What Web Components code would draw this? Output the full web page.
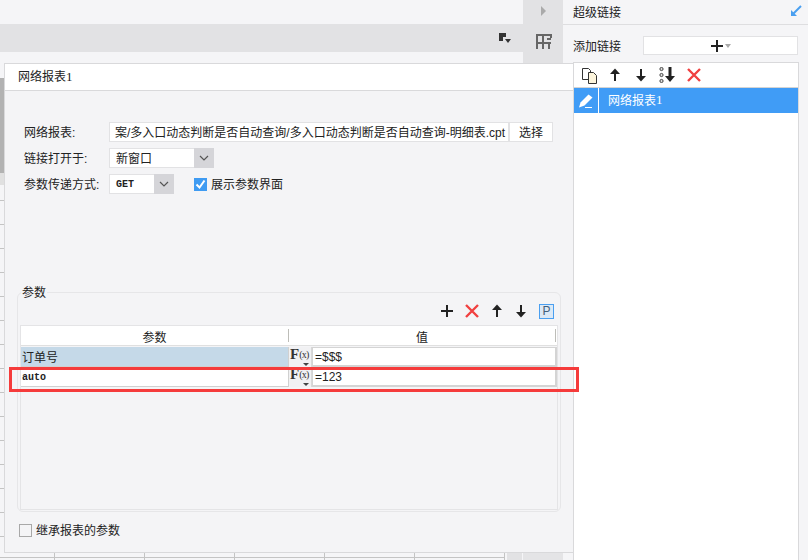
<!DOCTYPE html>
<html>
<head>
<meta charset="utf-8">
<style>
  html, body { margin: 0; padding: 0; background: #fff; }
  body { width: 808px; height: 560px; overflow: hidden; font: 12px "Liberation Sans", "Noto Sans CJK SC", sans-serif; color: #222; }
  .digit { font-family: "Liberation Serif", serif; font-size: 13px; }
</style>
</head>
<body>

<template id="icons">
  <svg data-name="plus" width="14" height="14" viewBox="0 0 14 14"><path d="M7 1v12M1 7h12" stroke="#222" stroke-width="2" fill="none"/></svg>
  <svg data-name="close" width="16" height="16" viewBox="0 0 16 16"><path d="M2 2l12 12M14 2L2 14" stroke="#f04040" stroke-width="2.4" fill="none"/></svg>
  <svg data-name="up" width="12" height="14" viewBox="0 0 12 14"><path d="M6 13V4" stroke="#222" stroke-width="2" fill="none"/><path d="M1 6l5-5.500L11 6z" fill="#222"/></svg>
  <svg data-name="down" width="12" height="14" viewBox="0 0 12 14"><path d="M6 1v9" stroke="#222" stroke-width="2" fill="none"/><path d="M1 8l5 5.500L11 8z" fill="#222"/></svg>
</template>

<script>
// Kleine Helfer für die Icons, damit nicht jedes Element sie neu schreiben muss
function icon(name) {
  const tpl = document.getElementById('icons');
  return tpl.content.querySelector(`[data-name="${name}"]`).outerHTML;
}

class XIcon extends HTMLElement {
  connectedCallback() {
    const shadow = this.attachShadow({ mode: 'open' });
    shadow.innerHTML = `
      <style>
        :host { display: inline-flex; align-items: center; justify-content: center; }
        svg { display: block; }
      </style>
      ${icon(this.getAttribute('name'))}`;
  }
}

// ---------- Hintergrund: Werkzeugleiste und Tabellenraster ----------
class XWorkspace extends HTMLElement {
  connectedCallback() {
    this.attachShadow({ mode: 'open' }).innerHTML = `
      <style>
        :host { display: flex; flex-direction: column; width: 574px; height: 560px; background: #f5f5f7; }
        .top { display: flex; height: 63px; flex: none; }
        .bands { flex: 1; display: flex; flex-direction: column; padding-top: 24px; }
        .band { height: 28px; background: #e2e2e4; display: flex; justify-content: flex-end; align-items: center; padding-right: 11px; }
        .side { width: 40px; background: #e2e2e4; margin-right: 11px; display: flex; flex-direction: column; align-items: center; }
        .arrow { width: 0; height: 0; margin-top: 6px; margin-left: 1px; border-left: 5px solid #aaa; border-top: 5px solid transparent; border-bottom: 5px solid transparent; }
        .side svg { margin-top: 17px; margin-left: 1px; }
        .sheet { flex: 1; display: flex; flex-direction: column; background:
          linear-gradient(#e2e2e4, #e2e2e4) 507px 489px / 15px 8px no-repeat,
          linear-gradient(#e4e4e6, #e4e4e6) 523px 489px / 40px 8px no-repeat,
          linear-gradient(#c4c4c4, #c4c4c4) 0 494px / 505px 1px no-repeat,
          repeating-linear-gradient(90deg, transparent 0 54px, #c4c4c4 54px 55px, transparent 55px 90px) 0 0 / 505px 100% no-repeat,
          repeating-linear-gradient(180deg, transparent 0 17px, #c4c4c4 17px 18px, transparent 18px 24px);
        }
        .strip { width: 4px; height: 95px; margin-top: 15px; background: #b2b2b2; flex: none; }
        .strip2 { width: 4px; height: 12px; background: #e0e0e0; flex: none; }
      </style>
      <div class="top">
        <div class="bands">
          <div class="band">
            <svg width="14" height="12" viewBox="0 0 14 12"><path d="M1 1h7v4H5v4H1z" fill="#333"/><path d="M7 7h6l-3 4z" fill="#333"/></svg>
          </div>
        </div>
        <div class="side">
          <div class="arrow"></div>
          <svg width="17" height="17" viewBox="0 0 17 17" fill="none" stroke="#666" stroke-width="2"><path d="M2 16V2h14v3M2 10h14v0M8 2v14M14 10v6M12 6h4"/></svg>
        </div>
      </div>
      <div class="sheet"><div class="strip"></div><div class="strip2"></div></div>`;
  }
}

// ---------- Eingabefelder ----------
class XSelect extends HTMLElement {
  connectedCallback() {
    this.attachShadow({ mode: 'open' }).innerHTML = `
      <style>
        :host { display: flex; background: #fff; border: 1px solid #e2e2e4; box-sizing: border-box; height: 20px; }
        .val { flex: 1; padding: 0 0 var(--select-drop, 2px) 6px; font: var(--select-font, inherit); display: flex; align-items: center; }
        .btn { width: 20px; margin: -1px -1px -1px 0; background: #d5d5d9; display: flex; align-items: center; justify-content: center; }
      </style>
      <div class="val"><slot></slot></div>
      <div class="btn"><svg width="10" height="6" viewBox="0 0 10 6"><path d="M1 1l4 4 4-4" fill="none" stroke="#555" stroke-width="1.200"/></svg></div>`;
  }
}

class XFormRow extends HTMLElement {
  connectedCallback() {
    this.attachShadow({ mode: 'open' }).innerHTML = `
      <style>
        :host { display: flex; align-items: center; height: 20px; }
        .label { width: 85px; flex: none; white-space: nowrap; padding-bottom: 2px; box-sizing: border-box; }
        .body { flex: 1; display: flex; align-items: center; }
      </style>
      <div class="label"><slot name="label"></slot></div>
      <div class="body"><slot></slot></div>`;
  }
}

class XCheck extends HTMLElement {
  connectedCallback() {
    const on = this.hasAttribute('checked');
    this.attachShadow({ mode: 'open' }).innerHTML = `
      <style>
        :host { display: inline-flex; align-items: center; gap: 4px; white-space: nowrap; }
        .box { width: 13px; height: 13px; box-sizing: border-box; display: flex; align-items: center; justify-content: center;
          background: ${on ? '#3f9bf2' : '#f4f4f6'}; border: 1px solid ${on ? '#3f9bf2' : '#a8a8a8'}; }
        span { padding-bottom: 2px; }
      </style>
      <div class="box">${on ? '<svg width="11" height="11" viewBox="0 0 11 11"><path d="M1.500 5.500l3 3 5-7" fill="none" stroke="#fff" stroke-width="2"/></svg>' : ''}</div>
      <span><slot></slot></span>`;
  }
}

// ---------- Parametertabelle ----------
class XParamRow extends HTMLElement {
  connectedCallback() {
    const selected = this.hasAttribute('selected');
    this.attachShadow({ mode: 'open' }).innerHTML = `
      <style>
        :host { display: flex; height: 20px; box-sizing: border-box; }
        .name { width: 268px; flex: none; box-sizing: border-box; padding-left: 1px; display: flex; align-items: center;
          background: ${selected ? '#c5d9e8' : '#fff'}; border-right: 1px solid #d0d0d0; border-bottom: 1px solid #d0d0d0; }
        .fx { width: 23px; flex: none; box-sizing: border-box; background: #f1f1f3; border-right: 1px solid #d8d8d8; position: relative;
          font: bold 15px/14px "Liberation Serif", serif; color: #333; padding-left: 1px; white-space: nowrap; overflow: hidden; }
        .fx small { font: 10px "Liberation Serif", serif; letter-spacing: -0.8px; vertical-align: 1px; }
        .fx i { position: absolute; left: 14px; bottom: 1px; border-left: 3px solid transparent; border-right: 3px solid transparent; border-top: 3px solid #444; }
        .val { flex: 1; background: #fff; border: 1px solid #d4d4d4; border-width: 1px 2px 2px 1px; padding-left: 2px; display: flex; align-items: center;
          font: 12px "Liberation Sans", sans-serif; }
      </style>
      <div class="name"><slot name="name"></slot></div>
      <div class="fx">F<small>(x)</small><i></i></div>
      <div class="val"><slot></slot></div>`;
  }
}

class XParamTable extends HTMLElement {
  connectedCallback() {
    this.attachShadow({ mode: 'open' }).innerHTML = `
      <style>
        :host { display: flex; flex-direction: column; flex: 1; border: 1px solid #e4e4e6; }
        .head { display: flex; height: 19px; background: #fff; margin-bottom: 1px; flex: none; border-bottom: 1px solid #e0e0e0; }
        .head div { display: flex; align-items: center; justify-content: center; box-sizing: border-box; border-right: 1px solid #bdbdb8; margin: 3px 0; padding-top: 2px; }
        .head .a { width: 268px; flex: none; }
        .head .b { flex: 1; margin-right: 1px; }
      </style>
      <div class="head"><div class="a">参数</div><div class="b">值</div></div>
      <slot></slot>`;
  }
}

class XParamGroup extends HTMLElement {
  connectedCallback() {
    this.attachShadow({ mode: 'open' }).innerHTML = `
      <style>
        :host { display: flex; flex-direction: column; position: relative; width: 544px; height: 220px; box-sizing: border-box;
          border: 1px solid #e6e6e8; border-radius: 6px; margin-left: 12px; padding: 2px 2px 1px 2px; }
        .legend { position: absolute; left: 3px; top: -8px; background: #f4f4f6; padding: 0 1px; line-height: 16px; }
        .tools { display: flex; justify-content: flex-end; align-items: center; height: 28px; flex: none; padding: 2px 4px 0 0; }
      </style>
      <div class="legend">参数</div>
      <div class="tools"><slot name="tools"></slot></div>
      <slot></slot>`;
  }
}

// ---------- Dialog ----------
class XDialog extends HTMLElement {
  connectedCallback() {
    this.attachShadow({ mode: 'open' }).innerHTML = `
      <style>
        /* Dialog liegt über dem Tabellenraster */
        :host { position: absolute; left: 4px; top: 63px; width: 570px; height: 490px; box-sizing: border-box;
          display: flex; flex-direction: column; background: #f4f4f6; border: 1px solid #d9d9db; }
        .tab { height: 27px; flex: none; box-sizing: border-box; background: #fff; border-bottom: 1px solid #d9d9db; padding: 0 0 2px 13px; display: flex; align-items: center; }
      </style>
      <div class="tab"><slot name="title"></slot></div>
      <slot></slot>`;
  }
}

// ---------- Rechte Seitenleiste ----------
class XLinkPanel extends HTMLElement {
  connectedCallback() {
    this.attachShadow({ mode: 'open' }).innerHTML = `
      <style>
        :host { display: flex; flex-direction: column; width: 234px; height: 560px; background: #f5f5f7; }
        .title { height: 25px; box-sizing: border-box; flex: none; margin-left: -11px; padding: 0 6px 2px 10px; display: flex; align-items: center; justify-content: space-between;
          border-bottom: 1px solid #dedee0; background: #f5f5f7; position: relative; z-index: 2; }
        .add { height: 37px; flex: none; box-sizing: border-box; padding: 11px 10px 7px 0; display: flex; align-items: center; justify-content: space-between; margin-left: -1px; }
        .add b { width: 155px; height: 19px; background: #fff; border: 1px solid #e2e2e4; box-sizing: border-box; display: flex; align-items: center; justify-content: center; gap: 1px; }
        .list { flex: 1; width: 226px; margin-left: -1px; box-sizing: border-box; background: #fff; border: 1px solid #d9d9db; border-bottom: 0; }
      </style>
      <div class="title"><span>超级链接</span>
        <svg width="12" height="12" viewBox="0 0 12 12"><path d="M11 1L3 9" stroke="#4a9ff0" stroke-width="2" fill="none"/><path d="M1 5v6h6z" fill="#4a9ff0"/></svg>
      </div>
      <div class="add"><span>添加链接</span>
        <b><x-icon name="plus"></x-icon><svg width="6" height="4" viewBox="0 0 6 4"><path d="M0 0h6L3 4z" fill="#aaa"/></svg></b>
      </div>
      <div class="list"><slot></slot></div>`;
  }
}

class XLinkItem extends HTMLElement {
  connectedCallback() {
    this.attachShadow({ mode: 'open' }).innerHTML = `
      <style>
        :host { display: flex; height: 25px; background: #409cf6; color: #fff; }
        .pen { width: 24px; flex: none; border-right: 1px solid #fff; display: flex; align-items: center; justify-content: center; }
        .txt { padding: 0 0 2px 9px; display: flex; align-items: center; }
      </style>
      <div class="pen"><svg width="16" height="16" viewBox="0 0 16 16"><path d="M1 14.500l1.500-5L10.500 1.500l4 3-8 8z" fill="#fff"/><path d="M7 14.500h7" stroke="#fff" stroke-width="1"/></svg></div>
      <div class="txt"><slot></slot></div>`;
  }
}

class XLinkTools extends HTMLElement {
  connectedCallback() {
    this.attachShadow({ mode: 'open' }).innerHTML = `
      <style>
        :host { display: flex; align-items: center; height: 24px; border-bottom: 1px solid #d4d4d4; padding-left: 7px; }
      </style>
      <svg width="17" height="17" viewBox="0 0 17 17" style="margin-right:11px"><path d="M1.500 1.500h6l2 2v9h-8z" fill="#fff" stroke="#333"/><path d="M7.500 5.500h5l3 3v8h-8z" fill="#fdf5dc" stroke="#333"/></svg>
      <x-icon name="up" style="margin-right:14px"></x-icon>
      <x-icon name="down" style="margin-right:12px"></x-icon>
      <svg width="17" height="16" viewBox="0 0 17 16" style="margin-right:10px"><g fill="#ddd" stroke="#444"><circle cx="2.500" cy="2" r="1.600"/><circle cx="2.500" cy="8" r="1.600"/><circle cx="2.500" cy="14" r="1.600"/></g><path d="M11 0v10" stroke="#222" stroke-width="3"/><path d="M6 9h10l-5 6z" fill="#222"/></svg>
      <x-icon name="close"></x-icon>`;
  }
}

class XApp extends HTMLElement {
  connectedCallback() {
    this.attachShadow({ mode: 'open' }).innerHTML = `
      <style>
        :host { display: flex; width: 808px; height: 560px; position: relative; overflow: hidden; }
        /* rote Markierung liegt über der Tabelle */
        .mark { position: absolute; left: 9px; top: 367px; width: 570px; height: 25px; box-sizing: border-box; border: 3px solid #f53b3b; pointer-events: none; }
      </style>
      <x-workspace></x-workspace>
      <x-link-panel><slot name="panel"></slot></x-link-panel>
      <slot></slot>
      <div class="mark"></div>`;
  }
}

class XStack extends HTMLElement {
  connectedCallback() {
    const s = this.attachShadow({ mode: 'open' });
    s.innerHTML = `
      <style>
        :host { display: flex; flex-direction: column; }
      </style>
      <slot></slot>`;
  }
}

customElements.define('x-icon', XIcon);
customElements.define('x-workspace', XWorkspace);
customElements.define('x-select', XSelect);
customElements.define('x-form-row', XFormRow);
customElements.define('x-check', XCheck);
customElements.define('x-param-row', XParamRow);
customElements.define('x-param-table', XParamTable);
customElements.define('x-param-group', XParamGroup);
customElements.define('x-dialog', XDialog);
customElements.define('x-link-panel', XLinkPanel);
customElements.define('x-link-item', XLinkItem);
customElements.define('x-link-tools', XLinkTools);
customElements.define('x-app', XApp);
customElements.define('x-stack', XStack);
</script>

<x-app>
  <x-link-tools slot="panel"></x-link-tools>
  <x-link-item slot="panel">网络报表<span class="digit">1</span></x-link-item>

  <x-dialog>
    <span slot="title">网络报表<span class="digit">1</span></span>
    <x-stack style="padding:31px 0 0 19px;gap:6px;height:170px;box-sizing:border-box;flex:none">
      <x-form-row>
        <span slot="label">网络报表:</span>
        <div style="width:400px;height:20px;box-sizing:border-box;background:#fff;border:1px solid #e2e2e4;display:flex;justify-content:flex-end;align-items:center;overflow:hidden;white-space:nowrap;padding:0 3px 2px 0">案/多入口动态判断是否自动查询/多入口动态判断是否自动查询-明细表.cpt</div>
        <div style="width:44px;height:20px;box-sizing:border-box;background:#fff;border:1px solid #e2e2e4;display:flex;align-items:center;justify-content:center;padding-bottom:2px">选择</div>
      </x-form-row>
      <x-form-row>
        <span slot="label">链接打开于:</span>
        <x-select style="width:105px">新窗口</x-select>
      </x-form-row>
      <x-form-row>
        <span slot="label">参数传递方式:</span>
        <x-select style="width:65px;--select-drop:0px;--select-font:bold 10px 'Liberation Mono',monospace">GET</x-select>
        <x-check checked style="margin-left:20px">展示参数界面</x-check>
      </x-form-row>
    </x-stack>
    <x-stack style="padding-top:31px;flex:none">
      <x-param-group>
        <x-icon slot="tools" name="plus" style="width:24px"></x-icon>
        <x-icon slot="tools" name="close" style="width:26px"></x-icon>
        <x-icon slot="tools" name="up" style="width:24px"></x-icon>
        <x-icon slot="tools" name="down" style="width:24px"></x-icon>
        <div slot="tools" style="width:15px;height:15px;box-sizing:border-box;margin-left:6px;border:1px solid #4a9ff0;background:#dce9f6;color:#44607a;font:12px/13px 'Liberation Sans',sans-serif;text-align:center">P</div>
        <x-param-table>
          <x-param-row selected><span slot="name">订单号</span>=$$$</x-param-row>
          <x-param-row><span slot="name" style="font:bold 10px 'Liberation Mono',monospace;padding-top:2px">auto</span>=123</x-param-row>
        </x-param-table>
      </x-param-group>
      <x-check style="margin:9px 0 0 14px">继承报表的参数</x-check>
    </x-stack>
  </x-dialog>
</x-app>

</body>
</html>
